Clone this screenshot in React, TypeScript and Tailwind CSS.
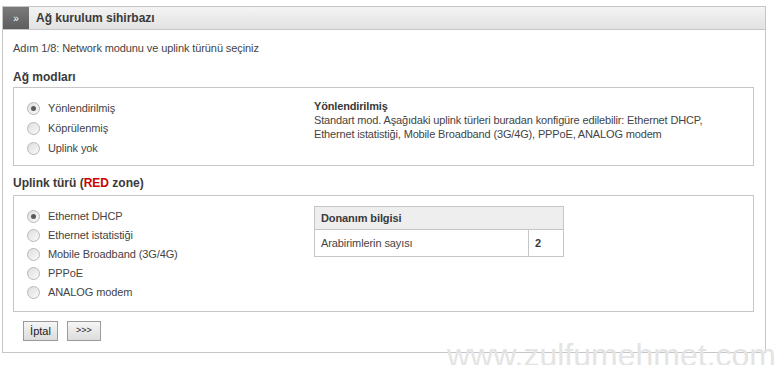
import React from 'react';

const font = { fontFamily: '"Liberation Sans", Arial, sans-serif' };

function Radio({ checked = false }: { checked?: boolean }) {
  return (
    <span className="relative inline-block h-[13px] w-[13px] shrink-0 rounded-full border border-[#b8b8b8] bg-linear-to-br from-[#dedede] to-[#fafafa]">
      {checked && (
        <span className="absolute left-[3px] top-[3px] h-[5px] w-[5px] rounded-full bg-[#5a5a5a]" />
      )}
    </span>
  );
}

function RadioRow({ label, checked, h }: { label: string; checked?: boolean; h: string }) {
  return (
    <div className={`flex items-center gap-[8px] ${h}`}>
      <Radio checked={checked} />
      <span className="text-[11px] tracking-[-0.1px] text-[#444]">{label}</span>
    </div>
  );
}

export default function App() {
  const modes = ['Yönlendirilmiş', 'Köprülenmiş', 'Uplink yok'];
  const uplinks = ['Ethernet DHCP', 'Ethernet istatistiği', 'Mobile Broadband (3G/4G)', 'PPPoE', 'ANALOG modem'];

  return (
    <div className="relative h-[365px] w-[776px] overflow-hidden bg-white" style={font}>
      <div className="ml-[2px] mt-[6px] w-[764px] border border-[#c6c6c6]">
        {/* header */}
        <div className="flex h-[23px] border-b border-[#c6c6c6] bg-linear-to-b from-[#f4f4f4] to-[#e2e2e2]">
          <div className="flex w-[26px] items-center justify-center bg-linear-to-b from-[#7a7a7a] to-[#5e5e5e] text-[10px] text-white">
            »
          </div>
          <div className="flex items-center pl-[7px] text-[12px] font-bold text-[#3a3a3a]">
            Ağ kurulum sihirbazı
          </div>
        </div>

        <div className="px-[10px] pb-[11px] pt-[11px]">
          <p className="text-[11px] leading-[14px] tracking-[-0.1px] text-[#444]">
            Adım 1/8: Network modunu ve uplink türünü seçiniz
          </p>

          <h3 className="mt-[14px] text-[12px] font-bold leading-[16px] text-[#3a3a3a]">Ağ modları</h3>
          <div className="mt-[2px] flex h-[79px] w-[741px] border border-[#c6c6c6] pl-[13px] pt-[10px]">
            <div className="w-[287px]">
              {modes.map((m, i) => (
                <RadioRow key={m} label={m} checked={i === 0} h="h-[20px]" />
              ))}
            </div>
            <div className="pt-[1px] text-[11px] leading-[14px] tracking-[-0.15px] text-[#444]">
              <div className="font-bold text-[#3a3a3a]">Yönlendirilmiş</div>
              <div>Standart mod. Aşağıdaki uplink türleri buradan konfigüre edilebilir: Ethernet DHCP,</div>
              <div>Ethernet istatistiği, Mobile Broadband (3G/4G), PPPoE, ANALOG modem</div>
            </div>
          </div>

          <h3 className="mt-[9px] text-[12px] font-bold leading-[16px] text-[#3a3a3a]">
            Uplink türü (<span className="text-[#cc0000]">RED</span> zone)
          </h3>
          <div className="mt-[4px] flex h-[117px] w-[741px] border border-[#c6c6c6] pl-[13px] pt-[11px]">
            <div className="w-[287px]">
              {uplinks.map((u, i) => (
                <RadioRow key={u} label={u} checked={i === 0} h="h-[19px]" />
              ))}
            </div>
            <div className="-mt-[1px]">
              <table className="w-[250px] border-collapse text-[11px] tracking-[-0.1px] text-[#444]">
                <tbody>
                  <tr className="h-[23px] bg-[#eeeeee]">
                    <td colSpan={2} className="border border-[#c6c6c6] px-[6px] font-bold text-[#3a3a3a]">
                      Donanım bilgisi
                    </td>
                  </tr>
                  <tr className="h-[27px]">
                    <td className="border border-[#c6c6c6] px-[6px]">Arabirimlerin sayısı</td>
                    <td className="w-[35px] border border-[#c6c6c6] px-[6px] font-bold text-[#3a3a3a]">2</td>
                  </tr>
                </tbody>
              </table>
            </div>
          </div>

          <div className="ml-[10px] mt-[9px] flex gap-[9px]">
            <button className="h-[20px] w-[35px] border border-[#9a9a9a] bg-linear-to-b from-[#f6f6f6] to-[#dcdcdc] text-[11px] text-[#222]">
              İptal
            </button>
            <button className="h-[20px] w-[34px] border border-[#9a9a9a] bg-linear-to-b from-[#f6f6f6] to-[#dcdcdc] text-[9px] text-[#222]">
              &gt;&gt;&gt;
            </button>
          </div>
        </div>
      </div>

      <div className="pointer-events-none absolute left-[447px] top-[331px] whitespace-nowrap text-[32px] text-[#e4e4e4]">
        www.zulfumehmet.com
      </div>
    </div>
  );
}
